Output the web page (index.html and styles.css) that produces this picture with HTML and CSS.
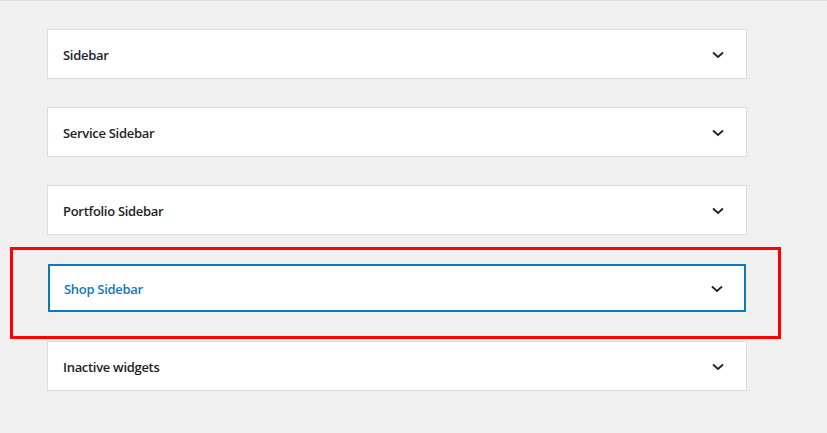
FILE: index.html
```html
<!DOCTYPE html>
<html>
<head>
<meta charset="utf-8">
<link rel="stylesheet" href="styles.css">
</head>
<body>
<div class="page">
  <div class="areas">
    <div class="area"><span class="title">Sidebar</span><svg class="chev" width="12" height="8" viewBox="0 0 12 8"><polyline points="1,1.5 6,6 11,1.5" fill="none" stroke="#1d2327" stroke-width="1.8"/></svg></div>
    <div class="area"><span class="title">Service Sidebar</span><svg class="chev" width="12" height="8" viewBox="0 0 12 8"><polyline points="1,1.5 6,6 11,1.5" fill="none" stroke="#1d2327" stroke-width="1.8"/></svg></div>
    <div class="area"><span class="title">Portfolio Sidebar</span><svg class="chev" width="12" height="8" viewBox="0 0 12 8"><polyline points="1,1.5 6,6 11,1.5" fill="none" stroke="#1d2327" stroke-width="1.8"/></svg></div>
    <div class="area focused"><span class="title">Shop Sidebar</span><svg class="chev" width="12" height="8" viewBox="0 0 12 8"><polyline points="1,1.5 6,6 11,1.5" fill="none" stroke="#1d2327" stroke-width="1.8"/></svg></div>
    <div class="area"><span class="title">Inactive widgets</span><svg class="chev" width="12" height="8" viewBox="0 0 12 8"><polyline points="1,1.5 6,6 11,1.5" fill="none" stroke="#1d2327" stroke-width="1.8"/></svg></div>
  </div>
  <div class="highlight"></div>
</div>
</body>
</html>
```
FILE: styles.css
```css
html, body {
  margin: 0;
  padding: 0;
  background: #f0f0f0;
}
.page {
  position: relative;
  width: 827px;
  height: 433px;
  border-top: 1px solid #dcdcdc;
  box-sizing: border-box;
  font-family: "Open Sans", "Noto Sans", sans-serif;
}
.areas {
  display: flex;
  flex-direction: column;
  gap: 28px;
  padding: 28px 0 0 47px;
}
.area {
  box-sizing: border-box;
  width: 700px;
  height: 50px;
  background: #fff;
  border: 1px solid #dcdcde;
  display: flex;
  align-items: center;
  justify-content: space-between;
  padding: 0 22px 0 15px;
}
.title {
  font-size: 13px;
  font-weight: 600;
  color: #1d2327;
  letter-spacing: -0.3px;
  padding-top: 2px;
}
.chev {
  display: block;
  margin-top: 1px;
}
.area.focused {
  width: 698px;
  height: 48px;
  margin: 1px 0 1px 1px;
  border: 2px solid #0a7bb8;
  padding: 0 21px 0 14px;
}
.area.focused .title {
  color: #1578b3;
}
.highlight {
  position: absolute;
  left: 10px;
  top: 246px;
  width: 771px;
  height: 92px;
  box-sizing: border-box;
  border: 3px solid #ff0000;
}
```
